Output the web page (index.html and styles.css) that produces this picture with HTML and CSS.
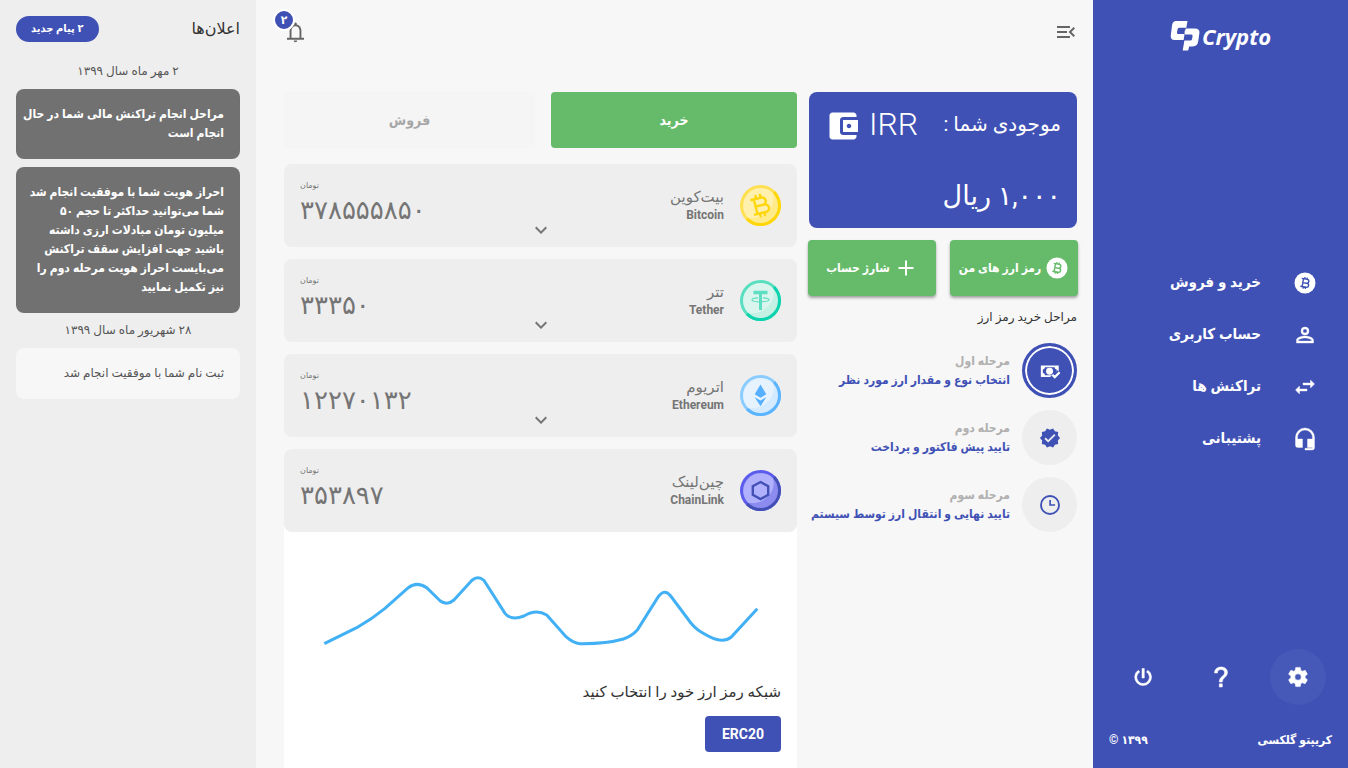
FILE: index.html
```html
<!DOCTYPE html>
<html lang="fa" dir="rtl">
<head>
<meta charset="utf-8">
<meta name="viewport" content="width=device-width, initial-scale=1">
<title>Crypto</title>
<link rel="stylesheet" href="styles.css">
</head>
<body>
<svg class="defs" aria-hidden="true">
  <symbol id="coin" viewBox="0 0 24 24">
    <circle class="disc" cx="12" cy="12" r="10.500"/>
    <path class="ink" transform="rotate(10 12 12)" d="M8 8h5.500a2 2 0 0 1 0 4H9.800M9.800 8v8M8 16h6a2 2 0 0 0 0-4h-.5M11 6.200V8M13.300 6.200V8M11 16v1.800M13.300 16v1.800"/>
  </symbol>
  <symbol id="chevron" viewBox="0 0 24 24"><path d="M7.400 8.600 12 13.200l4.600-4.600L18 10l-6 6-6-6z"/></symbol>
</svg>
<div class="layout">
  <aside class="sidebar">
    <a class="logo" href="#" dir="ltr">
      <svg class="logo-mark" viewBox="0 0 30 30" aria-hidden="true">
        <path d="M6 0h11.500l-1.200 6.800H9.200Q7.800 6.800 7.500 8.400L7 11.500q-.2 1.500 1.200 1.500h6.400l-1 6H4.500Q.2 19 .8 14.200L2 4.500Q2.600 0 6 0z"/>
        <path d="M15.800 7.400h9Q30 7.400 29.400 12l-1.200 8.500q-.8 4.900-5.500 4.900h-3.600l-.6 3q-.3 1.200-2 1.200h-3.800l1.700-10h5.800q1.600 0 1.900-1.500l.5-3q.2-1.500-1.300-1.500h-5.800q-1.300-.4-.9-3z"/>
      </svg>
      <span>Crypto</span>
    </a>
    <nav class="nav">
      <a href="#"><svg viewBox="0 0 24 24"><use href="#coin"/></svg><span>خرید و فروش</span></a>
      <a href="#"><svg viewBox="0 0 24 24"><path d="M12 4a4 4 0 1 0 0 8 4 4 0 0 0 0-8zm0 1.900a2.100 2.100 0 1 1 0 4.200 2.100 2.100 0 0 1 0-4.200zM12 13c-2.700 0-8.500 1.300-8.500 4v3h17v-3c0-2.700-5.800-4-8.500-4zm0 1.900c3 0 6.600 1.400 6.600 2.100v1.100H5.400V17c0-.7 3.600-2.100 6.600-2.100z"/></svg><span>حساب کاربری</span></a>
      <a href="#"><svg viewBox="0 0 24 24"><path d="M17.500 5v3H10v2h7.500v3l4-4zM6.500 11l-4 4 4 4v-3H14v-2H6.500z"/></svg><span>تراکنش ها</span></a>
      <a href="#"><svg viewBox="0 0 24 24"><path d="M12 1a9.500 9.500 0 0 0-9.500 9.500V18A2.500 2.500 0 0 0 5 20.500h4.500V12h-5v-1.500a7.500 7.500 0 0 1 15 0V12h-5v8.500h5v.8H12V23h7a2.500 2.500 0 0 0 2.500-2.500v-10A9.500 9.500 0 0 0 12 1z"/></svg><span>پشتیبانی</span></a>
    </nav>
    <div class="tools">
      <button class="round round-on" aria-label="تنظیمات"><svg viewBox="0 0 24 24"><path d="M19.140 12.940c.04-.3.06-.61.060-.940s-.02-.64-.07-.94l2.030-1.580c.18-.14.23-.41.12-.61l-1.920-3.320c-.12-.22-.37-.29-.59-.22l-2.390.96c-.5-.38-1.030-.7-1.620-.94l-.36-2.540A.48.480 0 0 0 13.920 2.400h-3.840c-.24 0-.43.17-.47.41l-.36 2.540c-.59.24-1.130.57-1.620.94l-2.390-.96c-.22-.08-.47 0-.59.22L2.740 8.870c-.12.21-.08.470.12.610l2.030 1.580c-.05.3-.09.63-.09.94s.02.64.07.94l-2.030 1.580c-.18.14-.23.41-.12.61l1.920 3.320c.12.22.37.29.59.22l2.390-.96c.5.38 1.030.7 1.620.94l.36 2.540c.05.24.24.41.48.41h3.840c.24 0 .44-.17.47-.41l.36-2.540c.59-.24 1.130-.56 1.620-.94l2.390.96c.22.08.47 0 .59-.22l1.920-3.320c.12-.22.070-.47-.12-.61zM12 15.200a3.200 3.200 0 1 1 0-6.400 3.200 3.200 0 0 1 0 6.400z"/></svg></button>
      <button class="round" aria-label="راهنما"><svg viewBox="0 0 24 24"><path d="M10.300 18.800h3V22h-3zM12 2C8.200 2 5.600 4.300 5.500 8h2.900c0-2.100 1.400-3.500 3.600-3.500 2 0 3.500 1.200 3.500 3.200 0 3.800-5.200 3.600-5.200 9.300h3c0-4.300 5.200-4.900 5.200-9.500C18.500 4.200 15.800 2 12 2z"/></svg></button>
      <button class="round" aria-label="خروج"><svg viewBox="0 0 24 24"><path d="M11 3.500h2.300V13H11zM17 5.300l-1.600 1.600A6.300 6.300 0 1 1 8.800 6.900L7.200 5.300a8.400 8.400 0 1 0 9.800 0z"/></svg></button>
    </div>
    <footer class="legal"><span>کریپتو گلکسی</span><span>۱۳۹۹ ©</span></footer>
  </aside>

  <main class="main">
    <header class="topbar">
      <button class="icon-btn" aria-label="بستن منو"><svg viewBox="0 0 24 24"><path d="M3 18h13v-2H3v2zm0-5h10v-2H3v2zm0-7v2h13V6H3zm18 9.590L17.420 12 21 8.410 19.590 7l-5 5 5 5L21 15.590z"/></svg></button>
      <button class="icon-btn" aria-label="اعلان‌ها"><svg viewBox="0 0 24 24"><path fill-rule="evenodd" d="M11.500 2.500c-.8 0-1.300.6-1.300 1.400v.6C7.500 5.100 5.600 7.500 5.600 10.500V17.700H3v2h17v-2h-2.600v-7.200c0-3-1.900-5.400-4.600-6v-.6c0-.8-.5-1.400-1.300-1.400zM11.500 6.200c2.500 0 4 2 4 4.300v7.200h-8v-7.200c0-2.300 1.500-4.300 4-4.300zM9.700 20.500h3.600a1.800 1.800 0 0 1-3.600 0z"/></svg><span class="badge">۲</span></button>
    </header>
    <div class="columns">
      <section class="account">
        <div class="wallet">
          <div class="wallet-head">
            <span class="wallet-title">موجودی شما :</span>
            <span class="currency" dir="ltr"><svg viewBox="0 0 24 24"><path d="M21 18v1c0 1.100-.9 2-2 2H5c-1.110 0-2-.9-2-2V5c0-1.100.89-2 2-2h14c1.100 0 2 .9 2 2v1h-9c-1.110 0-2 .9-2 2v8c0 1.100.89 2 2 2h9zm-9-2h10V8H12v8zm4-2.500c-.83 0-1.500-.67-1.500-1.500s.67-1.500 1.500-1.500 1.500.67 1.500 1.500-.67 1.500-1.500 1.500z"/></svg>IRR</span>
          </div>
          <div class="balance">۱,۰۰۰ ریال</div>
        </div>
        <div class="actions">
          <button class="action"><svg viewBox="0 0 24 24"><use href="#coin"/></svg>رمز ارز های من</button>
          <button class="action"><svg viewBox="0 0 24 24"><path d="M11 4.500h2V11h6.500v2H13v6.500h-2V13H4.500v-2H11z"/></svg>شارژ حساب</button>
        </div>
        <h2 class="steps-title">مراحل خرید رمز ارز</h2>
        <ol class="steps">
          <li><span class="step-icon step-now"><svg viewBox="0 0 24 24"><path d="M2 6h19.500v12.500H2z"/><path class="hole" d="M6.500 8H17a2.300 2.300 0 0 0 2.300 2.300v4A2.300 2.300 0 0 0 17 16.500H6.500a2.300 2.300 0 0 0-2.300-2.200v-4A2.300 2.300 0 0 0 6.500 8z"/><circle cx="11.500" cy="12.200" r="3.800"/><path class="tick-edge" d="m14.500 16 2.700 2.700 5.300-5.300"/><path class="tick" d="m14.500 16 2.700 2.700 5.300-5.300"/></svg></span><div><p class="step-name">مرحله اول</p><p class="step-text">انتخاب نوع و مقدار ارز مورد نظر</p></div></li>
          <li><span class="step-icon"><svg viewBox="0 0 24 24"><path d="m23 12-2.440-2.780.34-3.680-3.610-.82-1.890-3.180L12 3 8.600 1.540 6.710 4.720l-3.610.81.340 3.680L1 12l2.440 2.780-.34 3.690 3.610.82 1.890 3.180L12 21l3.400 1.460 1.890-3.180 3.610-.82-.34-3.680L23 12zm-13 5-4-4 1.410-1.410L10 14.170l6.590-6.590L18 9l-8 8z"/></svg></span><div><p class="step-name">مرحله دوم</p><p class="step-text">تایید پیش فاکتور و پرداخت</p></div></li>
          <li><span class="step-icon"><svg viewBox="0 0 24 24"><path d="M12 1.200a10.800 10.800 0 1 0 0 21.600 10.800 10.800 0 0 0 0-21.600zm0 2a8.800 8.800 0 1 1 0 17.600 8.800 8.800 0 0 1 0-17.600zM11.200 6.500v6.300H17.500v-1.700h-4.500V6.500z"/></svg></span><div><p class="step-name">مرحله سوم</p><p class="step-text">تایید نهایی و انتقال ارز توسط سیستم</p></div></li>
        </ol>
      </section>

      <section class="market">
        <div class="tabs"><button class="tab tab-on">خرید</button><button class="tab" disabled>فروش</button></div>
        <article class="coin">
          <div class="coin-id"><svg class="coin-logo" viewBox="0 0 41 41"><circle cx="20.500" cy="20.500" r="20.500" fill="#ffe052"/><path d="M35 6A20.500 20.500 0 0 1 6 35z" fill="#ffd60a"/><circle cx="20.500" cy="20.500" r="17.500" fill="#ffeb8a"/><path d="M8.130 32.870A17.500 17.500 0 0 1 32.870 8.130C37 20 26 35 8.130 32.870z" fill="#fff0ad"/><g transform="rotate(-14 20.500 20.500)" fill="none" stroke="#ffd60a" stroke-width="2.400" stroke-linecap="round" stroke-linejoin="round"><path d="M13 13h10a3.700 3.700 0 0 1 0 7.500h-7.500M15.500 13v15M13 28h11.500a3.700 3.700 0 0 0 0-7.500H23M18 10v3M22.500 10v3M18 28v3M22.500 28v3"/></g></svg><div><h3>بیت‌کوین</h3><p>Bitcoin</p></div></div>
          <button class="expand" aria-label="نمایش"><svg viewBox="0 0 24 24"><use href="#chevron"/></svg></button>
          <div class="price"><small>تومان</small><strong>۳۷۸۵۵۵۸۵۰</strong></div>
        </article>
        <article class="coin">
          <div class="coin-id"><svg class="coin-logo" viewBox="0 0 41 41"><circle cx="20.500" cy="20.500" r="20.500" fill="#57dfbf"/><path d="M35 6A20.500 20.500 0 0 1 6 35z" fill="#0bd3ad"/><circle cx="20.500" cy="20.500" r="17.500" fill="#c5f0e4"/><path d="M8.130 32.870A17.500 17.500 0 0 1 32.870 8.130C37 20 26 35 8.130 32.870z" fill="#daf5ee"/><path d="M13.500 10.800h14v3.400H22V30h-3V14.200h-5.500z" fill="#5fdfc1"/><path d="M18 17.800c-4 .2-6 .9-6 1.900 0 1.300 4 2.100 8.500 2.100s8.500-.8 8.500-2.100c0-1-2-1.700-6-1.900" fill="none" stroke="#5fdfc1" stroke-width="1.200"/></svg><div><h3>تتر</h3><p>Tether</p></div></div>
          <button class="expand" aria-label="نمایش"><svg viewBox="0 0 24 24"><use href="#chevron"/></svg></button>
          <div class="price"><small>تومان</small><strong>۳۳۳۵۰</strong></div>
        </article>
        <article class="coin">
          <div class="coin-id"><svg class="coin-logo" viewBox="0 0 41 41"><circle cx="20.500" cy="20.500" r="20.500" fill="#8accff"/><path d="M35 6A20.500 20.500 0 0 1 6 35z" fill="#5cb4ff"/><circle cx="20.500" cy="20.500" r="17.500" fill="#d4eaff"/><path d="M8.130 32.870A17.500 17.500 0 0 1 32.870 8.130C37 20 26 35 8.130 32.870z" fill="#e6f3ff"/><path d="m20.500 9.500 5.800 9.800-5.800 3.400-5.800-3.400zM14.700 22.200l5.800 3.200 5.800-3.200-5.800 9z" fill="#57afff"/></svg><div><h3>اتریوم</h3><p>Ethereum</p></div></div>
          <button class="expand" aria-label="نمایش"><svg viewBox="0 0 24 24"><use href="#chevron"/></svg></button>
          <div class="price"><small>تومان</small><strong>۱۲۲۷۰۱۳۲</strong></div>
        </article>
        <div class="open">
          <article class="coin">
            <div class="coin-id"><svg class="coin-logo" viewBox="0 0 41 41"><circle cx="20.500" cy="20.500" r="20.500" fill="#5b5bec"/><path d="M35 6A20.500 20.500 0 0 1 6 35z" fill="#4350b5"/><circle cx="20.500" cy="20.500" r="17.500" fill="#8c8cf0"/><path d="M8.130 32.870A17.500 17.500 0 0 1 32.870 8.130C37 20 26 35 8.130 32.870z" fill="#b0b0fc"/><path d="m20.500 12 7.700 4.300v8.500l-7.700 4.300-7.700-4.300v-8.500z" fill="none" stroke="#4350b5" stroke-width="2.400"/></svg><div><h3>چین‌لینک</h3><p>ChainLink</p></div></div>
            <div class="price"><small>تومان</small><strong>۳۵۳۸۹۷</strong></div>
          </article>
          <svg class="chart" viewBox="0 0 513 144" role="img" aria-label="نمودار قیمت"><path d="M40.300 111.700 72.700 95.700Q88 87 101 76.300L124.300 55.700Q133 49 142.700 55.700L156 68.700Q163 74 170 68L187.700 48.500Q194 43 200 48.500L221 81.300Q227 89 240 84Q252 76.500 262.700 83L282 104.700Q289 111 296 111.700Q322 112 339.300 107Q348 104 353.300 98L374.300 64.700Q380.500 56 386.700 64L406.700 90.700Q412 97 416.700 99.700Q427 106 432 107.300Q441 110 447 105.300L473.300 76.700"/></svg>
          <div class="network">
            <p>شبکه رمز ارز خود را انتخاب کنید</p>
            <button class="chip">ERC20</button>
          </div>
        </div>
      </section>
    </div>
  </main>

  <aside class="notices">
    <header><h2>اعلان‌ها</h2><a class="pill" href="#">۲ پیام جدید</a></header>
    <p class="date">۲ مهر ماه سال ۱۳۹۹</p>
    <article class="notice">مراحل انجام تراکنش مالی شما در حال<br>انجام است</article>
    <article class="notice">احراز هویت شما با موفقیت انجام شد<br>شما می‌توانید حداکثر تا حجم ۵۰<br>میلیون تومان مبادلات ارزی داشته<br>باشید جهت افزایش سقف تراکنش<br>می‌بایست احراز هویت مرحله دوم را<br>نیز تکمیل نمایید</article>
    <p class="date">۲۸ شهریور ماه سال ۱۳۹۹</p>
    <article class="notice notice-read">ثبت نام شما با موفقیت انجام شد</article>
  </aside>
</div>
</body>
</html>
```

FILE: styles.css
```css
* { box-sizing: border-box; }
body, h2, h3, p, ol { margin: 0; padding: 0; }
body {
  background: #f7f7f7;
  color: #333;
  font-family: Roboto, "DejaVu Sans", sans-serif;
  font-size: 12px;
  line-height: 19px;
}
button { border: 0; padding: 0; background: none; color: inherit; font: inherit; cursor: pointer; }
a { color: inherit; text-decoration: none; }
svg { display: block; width: 24px; height: 24px; flex: none; fill: currentColor; }
.defs { position: absolute; width: 0; height: 0; }
.disc { stroke: none; }
.ink { fill: none; stroke: var(--ink); stroke-width: 1.4; }
.layout { display: flex; min-height: 100vh; }

.nav, .legal, .action, .steps, .tab, .badge, .pill, .notice {
  font-family: Roboto, "DejaVu Sans Condensed", "DejaVu Sans", sans-serif;
  font-weight: 700;
}

.sidebar { --ink: #3f51b5; flex: none; width: 255px; display: flex; flex-direction: column; background: #3f51b5; color: #fff; }
.logo { display: flex; align-items: center; justify-content: center; gap: 2px; height: 72px; font: italic bold 22px/28px "Open Sans", sans-serif; }
.logo-mark { width: 30px; height: 30px; }
.nav { flex: 1; display: flex; flex-direction: column; justify-content: center; }
.nav a { display: flex; align-items: center; gap: 32px; height: 52px; padding: 0 31px; font-size: 15px; }
.nav svg { stroke: currentColor; stroke-width: .4; }
.tools { display: flex; justify-content: space-evenly; }
.round { width: 56px; height: 56px; border-radius: 50%; display: grid; place-items: center; }
.round svg { stroke: currentColor; stroke-width: .5; }
.round-on { background: #4659b8; }
.legal { display: flex; justify-content: space-between; padding: 26px 16px 18px; }

.main { flex: 1; min-width: 0; display: flex; flex-direction: column; padding: 0 15px 0 28px; }
.topbar { display: flex; justify-content: space-between; align-items: center; height: 64px; color: #666; }
.icon-btn { position: relative; }
.badge { position: absolute; top: -11px; left: -11px; width: 22px; height: 22px; border: 2px solid #fff; border-radius: 50%; background: #3f51b5; color: #fff; font-size: 12px; line-height: 18px; }
.columns { flex: 1; display: grid; grid-template-columns: 10fr 19fr; gap: 11px; padding-top: 28px; }

.wallet { display: flex; flex-direction: column; justify-content: space-between; height: 136px; margin: 0 1px; padding: 12px 16px; border-radius: 8px; background: #3f51b5; color: #fff; }
.wallet-head { display: flex; justify-content: space-between; align-items: center; }
.wallet-title { font-size: 20px; line-height: 32px; }
.currency { display: flex; align-items: end; gap: 8px; font-size: 32px; line-height: 40px; font-weight: 300; }
.currency svg { width: 36px; height: 36px; }
.balance { font-size: 27px; line-height: 40px; }
.actions { --ink: #66bb6a; display: grid; grid-template-columns: 1fr 1fr; gap: 14px; margin-top: 12px; }
.action { display: flex; align-items: center; justify-content: center; gap: 4px; height: 56px; border-radius: 4px; background: #66bb6a; color: #fff; box-shadow: 0 2px 3px rgba(0, 0, 0, .35); }
.steps-title { margin: 12px 1px 16px; font-size: 12px; line-height: 19px; font-weight: 400; }
.steps { display: grid; gap: 12px; margin: 0 1px; list-style: none; }
.steps li { display: flex; align-items: center; gap: 12px; }
.step-icon { flex: none; width: 55px; height: 55px; border-radius: 50%; display: grid; place-items: center; background: #eee; color: #3f51b5; }
.step-icon svg { width: 22px; height: 22px; }
.step-now { border: 3px solid #3f51b5; background: #3f51b5; box-shadow: inset 0 0 0 2px #fff; color: #fff; }
.hole { fill: #3f51b5; }
.tick, .tick-edge { fill: none; stroke: #fff; stroke-width: 2.4; }
.tick-edge { stroke: #3f51b5; stroke-width: 6; }
.step-name { color: #b0b0b0; }
.step-text { color: #3f51b5; white-space: nowrap; }

.market { display: flex; flex-direction: column; gap: 12px; min-width: 0; }
.tabs { display: grid; grid-template-columns: 49fr 50fr; gap: 16px; margin-bottom: 4px; }
.tab { height: 56px; border-radius: 4px; background: #f5f5f5; color: #a6a6a6; font-size: 14px; }
.tab-on { background: #66bb6a; color: #fff; }
.coin { display: grid; grid-template-columns: 1fr auto 1fr; height: 83px; padding: 0 16px; border-radius: 8px; background: #eee; color: #757575; }
.coin-id { display: flex; align-items: center; gap: 16px; }
.coin-id h3 { font-size: 15px; line-height: 18px; font-weight: 400; }
.coin-id p { font-size: 12px; line-height: 18px; font-weight: 700; }
.coin-logo { width: 41px; height: 41px; }
.expand { align-self: end; padding-bottom: 5px; }
.price { grid-column: 3; padding-top: 14px; direction: ltr; }
.price small, .price strong { display: block; }
.price small { font-size: 8px; line-height: 16px; }
.price strong { font-size: 26px; line-height: 32px; font-weight: 400; }
.open { flex: 1; border-radius: 8px 8px 0 0; background: #fff; }
.chart { width: 100%; height: auto; }
.chart path { fill: none; stroke: #42b0f5; stroke-width: 3; }
.network { padding: 0 16px 16px; }
.network p { font-size: 15px; line-height: 32px; }
.chip { display: block; margin-top: 8px; padding: 0 17px; height: 36px; border-radius: 4px; background: #3f51b5; color: #fff; font-size: 14px; font-weight: 700; }

.notices { flex: none; width: 256px; padding: 16px; background: #eee; }
.notices header { display: flex; justify-content: space-between; align-items: center; margin-bottom: 20px; }
.notices h2 { font-size: 16px; line-height: 26px; font-weight: 400; }
.pill { padding: 0 15px; border-radius: 13px; background: #3f51b5; color: #fff; font-size: 11px; line-height: 26px; }
.date { padding-bottom: 8px; text-align: center; color: #555; }
.notice { margin-bottom: 8px; padding: 16px 16px 16px 0; border-radius: 8px; background: #717171; color: #fff; }
.notice-read { background: #f7f7f7; color: #555; font-family: Roboto, "DejaVu Sans", sans-serif; font-weight: 400; }
```
